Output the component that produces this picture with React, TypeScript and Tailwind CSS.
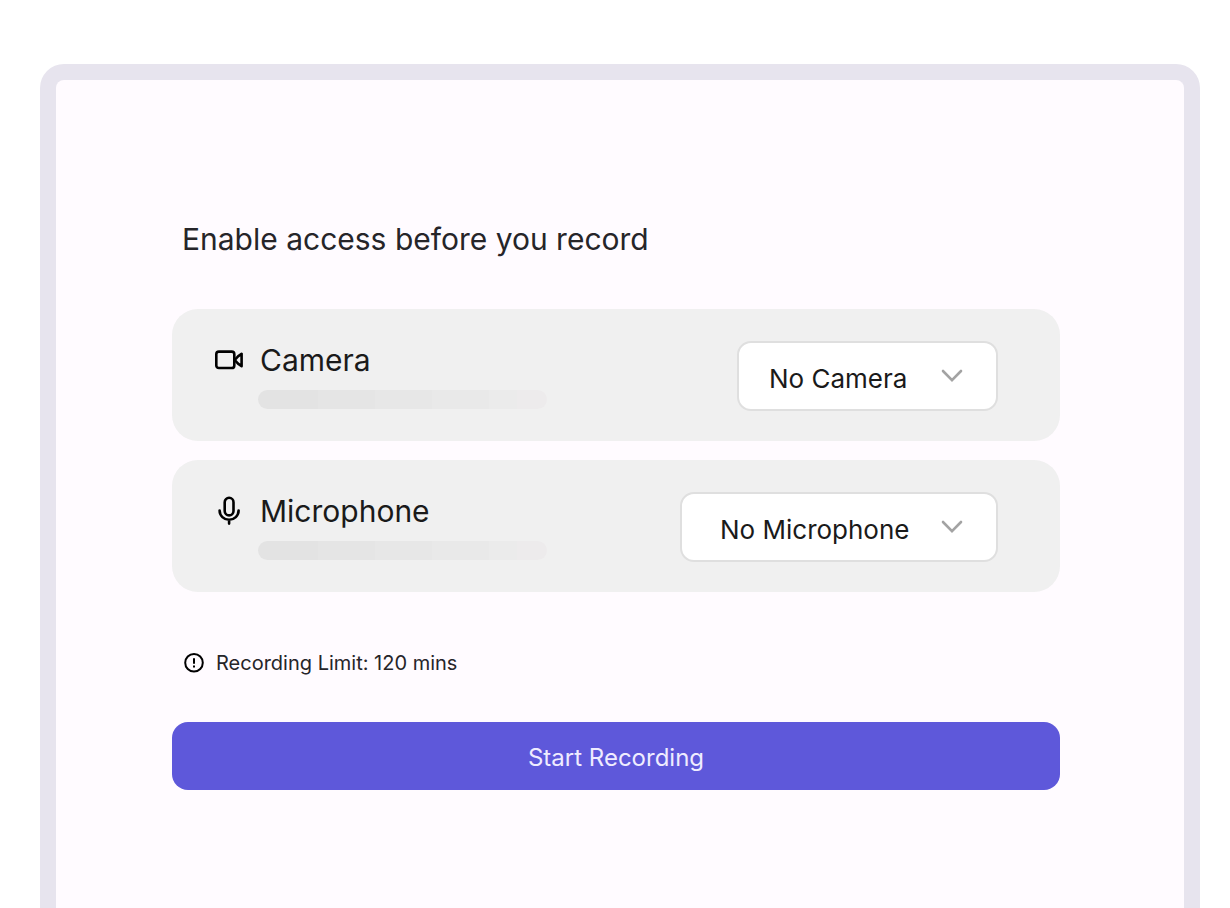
import { useState } from 'react'
import type { ReactNode } from 'react'

interface DeviceCardProps {
  id: string
  label: string
  icon: ReactNode
  options: string[]
  selectClassName: string
}

function CameraIcon() {
  return (
    <svg viewBox="0 0 30 30" className="size-[30px] shrink-0" fill="none" stroke="black" strokeWidth="2.6" strokeLinejoin="round" aria-hidden="true">
      <rect x="2.3" y="6.6" width="18" height="16.4" rx="2.6" />
      <path d="M20.8 15 L24 11.4 L27.6 8.8 V21.2 L24 18.6 Z" />
    </svg>
  )
}

function MicrophoneIcon() {
  return (
    <svg viewBox="0 0 30 30" className="size-[30px] shrink-0" fill="none" stroke="black" strokeWidth="2.6" strokeLinecap="round" aria-hidden="true">
      <rect x="10.7" y="1.8" width="8.8" height="17.6" rx="4.4" />
      <path d="M5.6 14.6 A9.5 9.2 0 0 0 24.6 14.6 M15.1 24 V27.6" />
    </svg>
  )
}

function DeviceCard({ id, label, icon, options, selectClassName }: DeviceCardProps) {
  const [value, setValue] = useState(options[0])

  return (
    <div className="flex h-[132px] items-center justify-between rounded-[26px] bg-[#f0f0f0] pl-[42px] pr-[62px] pt-0.5">
      <div>
        <label htmlFor={id} className="flex items-center gap-4 text-[30px] leading-9 text-[#1a1a1a]">
          {icon}
          {label}
        </label>
        {/* level meter */}
        <div className="mb-0.5 ml-11 mt-3 flex h-[19px] w-[289px] overflow-hidden rounded-full">
          <div className="w-[60px] bg-[#e3e3e3]" />
          <div className="w-[57px] bg-[#e5e5e5]" />
          <div className="w-[57px] bg-[#e7e7e7]" />
          <div className="w-[57px] bg-[#e9e9e9]" />
          <div className="w-[28px] bg-[#ebebeb]" />
          <div className="flex-1 bg-[#edebec]" />
        </div>
      </div>
      <div className="relative">
        <select
          id={id}
          value={value}
          onChange={e => setValue(e.target.value)}
          className={`h-[70px] appearance-none rounded-[14px] border-2 border-[#dfdfdf] bg-white pt-1 text-[26px] text-[#1a1a1a] ${selectClassName}`}
        >
          {options.map(option => <option key={option}>{option}</option>)}
        </select>
        <svg viewBox="0 0 22 14" className="pointer-events-none absolute right-[35px] top-7 h-3.5 w-[22px]" fill="none" stroke="#a3a3a3" strokeWidth="2.6" strokeLinecap="round" aria-hidden="true">
          <path d="M2 2 L11 11.2 L20 2" />
        </svg>
      </div>
    </div>
  )
}

export default function App() {
  return (
    <main className="flex min-h-screen flex-col bg-white pl-10 pr-[30px] pt-16 font-['Inter',sans-serif]">
      <div className="flex-1 rounded-t-3xl border-16 border-b-0 border-[#e7e4ee] bg-[#fffbff] pb-16 pl-[116px] pr-[124px] pt-[139px]">
        <h1 className="pl-2.5 text-[30px] leading-10 text-[#262529]">Enable access before you record</h1>

        <div className="mt-[50px] flex flex-col gap-[19px]">
          <DeviceCard
            id="camera"
            label="Camera"
            icon={<CameraIcon />}
            options={['No Camera', 'Built-in Camera']}
            selectClassName="w-[261px] pl-[30px]"
          />
          <DeviceCard
            id="microphone"
            label="Microphone"
            icon={<MicrophoneIcon />}
            options={['No Microphone', 'Built-in Microphone']}
            selectClassName="w-[318px] pl-[38px]"
          />
        </div>

        <p className="mt-[57px] flex items-center gap-3 pl-3 text-xl leading-7 text-[#262529]">
          <svg viewBox="0 0 20 20" className="size-5" fill="none" stroke="black" strokeWidth="2" aria-hidden="true">
            <circle cx="10" cy="9.8" r="8.8" />
            <path d="M10 5.2 V10.8 M10 12.4 V14.4" />
          </svg>
          Recording Limit: 120 mins
        </p>

        <button type="button" className="mt-[45px] h-[68px] w-full rounded-2xl bg-[#5e58da] pt-1 text-2xl text-[#efecff] hover:bg-[#524cc9]">
          Start Recording
        </button>
      </div>
    </main>
  )
}
